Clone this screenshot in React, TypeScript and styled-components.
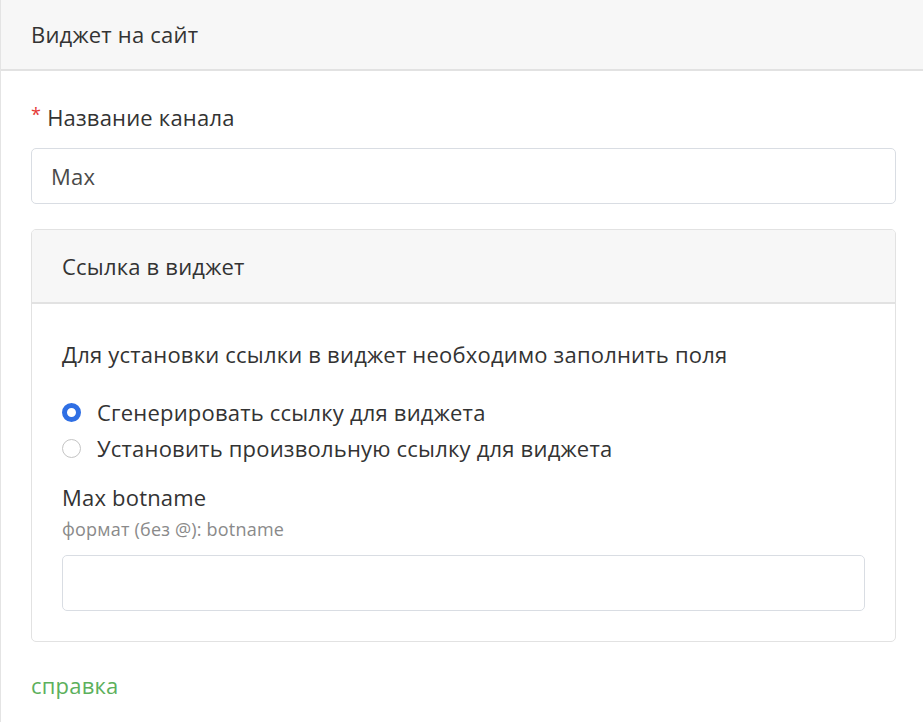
import React, { useState } from 'react';
import styled, { createGlobalStyle } from 'styled-components';

const GlobalStyle = createGlobalStyle`
  * { box-sizing: border-box; }
  html, body { margin: 0; padding: 0; background: #ffffff; }
  body {
    font-family: "Open Sans", "Noto Sans", "Liberation Sans", sans-serif;
    color: #333333;
    letter-spacing: 0.2px;
  }
`;

const Page = styled.div`
  min-height: 722px;
  border-left: 1px solid #e4e4e4;
  background: #ffffff;
`;

const TopBar = styled.div`
  height: 71px;
  display: flex;
  align-items: center;
  padding: 0 30px 2px;
  background: #f7f7f7;
  border-bottom: 2px solid #e2e2e2;
  font-size: 22px;
  color: #333333;
`;

const Content = styled.div`
  padding: 32px 27px 0 30px;
`;

const Label = styled.label`
  display: block;
  margin-bottom: 17px;
  font-size: 22px;
  line-height: 28px;
  color: #333333;
`;

const Required = styled.span`
  display: inline-block;
  font-size: 18px;
  vertical-align: top;
  line-height: 22px;
  color: #e53935;
  margin-right: 6px;
`;

const Input = styled.input<{ $height: number }>`
  display: block;
  width: 100%;
  height: ${p => p.$height}px;
  padding: 0 19px;
  border: 1px solid #d9dde3;
  border-radius: 5px;
  font-family: inherit;
  font-size: 22px;
  letter-spacing: 0.2px;
  color: #4a4a4a;
  background: #ffffff;
  outline: none;
`;

const Card = styled.div`
  margin-top: 25px;
  border: 1px solid #e2e2e2;
  border-radius: 5px;
  overflow: hidden;
`;

const CardHeader = styled.div`
  height: 74px;
  display: flex;
  align-items: center;
  padding: 0 30px;
  background: #f7f7f7;
  border-bottom: 2px solid #e2e2e2;
  font-size: 22px;
  color: #333333;
`;

const CardBody = styled.div`
  padding: 36px 30px 30px;
`;

const Text = styled.p`
  margin: 0 0 26px;
  font-size: 22px;
  line-height: 28px;
  color: #333333;
`;

const RadioRow = styled.label`
  display: flex;
  align-items: center;
  height: 36px;
  font-size: 22px;
  color: #333333;
  cursor: pointer;
`;

const RadioMark = styled.span<{ $checked: boolean }>`
  width: 19px;
  height: 19px;
  margin-right: 16px;
  border-radius: 50%;
  flex-shrink: 0;
  background: #ffffff;
  border: ${p => (p.$checked ? '5.5px solid #2f6fe4' : '1px solid #c4c4c4')};
`;

const FieldLabel = styled.div`
  margin-top: 17px;
  font-size: 22px;
  line-height: 28px;
  color: #333333;
`;

const Hint = styled.div`
  margin: 7px 0 15px;
  font-size: 18px;
  line-height: 22px;
  color: #8a8a8a;
`;

const HelpLink = styled.a`
  display: inline-block;
  margin-top: 28px;
  font-size: 22px;
  line-height: 30px;
  color: #5cb05c;
  text-decoration: none;
`;

const options = [
  'Сгенерировать ссылку для виджета',
  'Установить произвольную ссылку для виджета',
];

export default function App() {
  const [mode, setMode] = useState(0);

  return (
    <>
      <GlobalStyle />
      <Page>
        <TopBar>Виджет на сайт</TopBar>
        <Content>
          <Label>
            <Required>*</Required>Название канала
          </Label>
          <Input $height={56} defaultValue="Max" />
          <Card>
            <CardHeader>Ссылка в виджет</CardHeader>
            <CardBody>
              <Text>Для установки ссылки в виджет необходимо заполнить поля</Text>
              {options.map((o, i) => (
                <RadioRow key={o} onClick={() => setMode(i)}>
                  <RadioMark $checked={mode === i} />
                  {o}
                </RadioRow>
              ))}
              <FieldLabel>Max botname</FieldLabel>
              <Hint>формат (без @): botname</Hint>
              <Input $height={56} />
            </CardBody>
          </Card>
          <HelpLink href="#">справка</HelpLink>
        </Content>
      </Page>
    </>
  );
}
